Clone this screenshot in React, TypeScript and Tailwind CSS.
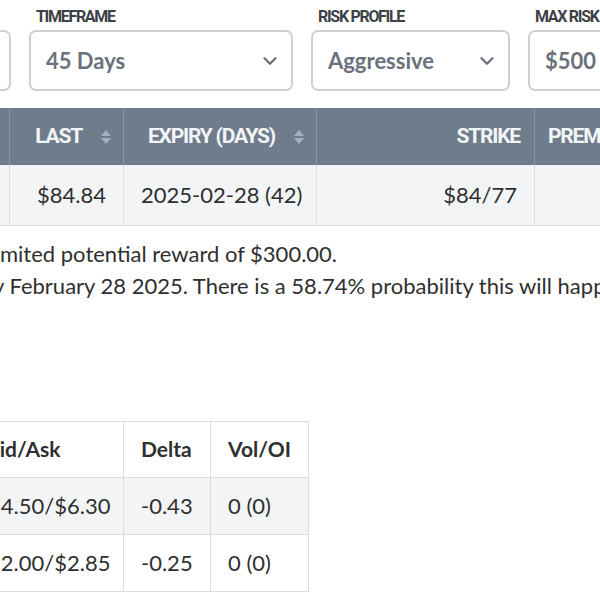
import { ChevronDown } from "lucide-react";

function SortIcon() {
  return (
    <svg width="12" height="16" viewBox="0 0 12 16" className="shrink-0">
      <path d="M6 1 L11 7 H1 Z" fill="#a7b0ba" />
      <path d="M6 15 L11 9 H1 Z" fill="#a7b0ba" />
    </svg>
  );
}

function Field({
  label,
  value,
  width,
  chevron = true,
}: {
  label: string;
  value: string;
  width: string;
  chevron?: boolean;
}) {
  return (
    <div className={`flex flex-col shrink-0 ${width}`}>
      <div className="h-[16px] mb-[5px] pl-[7px] text-[16px] leading-[16px] font-bold uppercase text-[#3d4046] tracking-[-1.3px] font-['Roboto',sans-serif] whitespace-nowrap">
        {label}
      </div>
      <div className="h-[61px] flex items-center justify-between border-2 border-[#cdd1d6] rounded-[7px] pl-[15px] pr-[10px] bg-white">
        <span className="text-[22px] font-bold text-[#6a717c] whitespace-nowrap">{value}</span>
        {chevron && <ChevronDown size={22} strokeWidth={2.5} color="#6a717c" />}
      </div>
    </div>
  );
}

function Cut({ text }: { text: string }) {
  // leading part of the line, hanging off the left edge
  return (
    <span className="inline-flex justify-end w-0 whitespace-nowrap">
      <span>{text}</span>
    </span>
  );
}

export default function App() {
  const head = "h-[57px] bg-[#6f7c8b] border-x border-[#8896a4] text-[#f2f4f6] text-[21px] font-bold uppercase tracking-[-1.2px] font-['Roboto',sans-serif]";
  const cell = "h-[60px] border-x border-[#d9dde2] text-[22px] text-[#2f2f2f]";
  const lowTh = "h-[56px] border border-[#d9dde2] text-[21px] font-bold text-[#2f2f2f] text-left pl-[17px]";
  const lowTd = "h-[57px] border border-[#d9dde2] text-[22px] text-[#2f2f2f] text-left pl-[17px]";

  return (
    <div className="w-[600px] h-[600px] overflow-hidden bg-white font-['Lato',sans-serif]">
      {/* Filters */}
      <div className="flex gap-[18px] pt-[9px] ml-[-139px]">
        <Field label="Ticker" value="XOM" width="w-[150px]" chevron={false} />
        <Field label="Timeframe" value="45 Days" width="w-[264px]" />
        <Field label="Risk Profile" value="Aggressive" width="w-[199px]" />
        <Field label="Max Risk" value="$500" width="w-[200px]" chevron={false} />
      </div>

      {/* Trade table */}
      <table className="mt-[17px] ml-[-111px] w-[845px] table-fixed border-collapse">
        <colgroup>
          <col className="w-[120px]" />
          <col className="w-[114px]" />
          <col className="w-[193px]" />
          <col className="w-[218px]" />
          <col className="w-[200px]" />
        </colgroup>
        <thead>
          <tr>
            <th className={head}>
              <div className="flex items-center justify-end gap-[18px] pr-[11px]">
                <span>Symbol</span>
                <SortIcon />
              </div>
            </th>
            <th className={head}>
              <div className="flex items-center justify-end gap-[18px] pr-[11px]">
                <span>Last</span>
                <SortIcon />
              </div>
            </th>
            <th className={head}>
              <div className="flex items-center justify-end gap-[18px] pr-[11px]">
                <span>Expiry (Days)</span>
                <SortIcon />
              </div>
            </th>
            <th className={`${head} text-right pr-[14px]`}>Strike</th>
            <th className={`${head} text-left pl-[13px]`}>Premium</th>
          </tr>
        </thead>
        <tbody>
          <tr className="bg-[#f3f4f6] border-b border-[#d9dde2]">
            <td className={`${cell} text-left pl-[17px]`}>XOM</td>
            <td className={`${cell} text-right pr-[17px]`}>$84.84</td>
            <td className={`${cell} text-left pl-[17px] whitespace-nowrap`}>2025-02-28 (42)</td>
            <td className={`${cell} text-right pr-[17px]`}>$84/77</td>
            <td className={cell}></td>
          </tr>
        </tbody>
      </table>

      {/* Summary */}
      <div className="mt-[12px] text-[22px] leading-[32px] text-[#2f2f2f] whitespace-nowrap">
        <p>
          <Cut text="This trade has a li" />
          mited potential reward of $300.00.
        </p>
        <p className="ml-[-7px]">
          <Cut text="The maximum reward is realized if XOM stays above $84.00 b" />
          y February 28 2025. There is a 58.74% probability this will happen.
        </p>
      </div>

      {/* Legs */}
      <table className="mt-[119px] ml-[-30px] w-[338px] table-fixed border-collapse">
        <colgroup>
          <col className="w-[153px]" />
          <col className="w-[87px]" />
          <col className="w-[98px]" />
        </colgroup>
        <thead>
          <tr className="bg-white">
            <th className={`${lowTh} !pl-[15px]`}>Bid/Ask</th>
            <th className={lowTh}>Delta</th>
            <th className={lowTh}>Vol/OI</th>
          </tr>
        </thead>
        <tbody>
          <tr className="bg-[#f3f4f6]">
            <td className={lowTd}>$4.50/$6.30</td>
            <td className={lowTd}>-0.43</td>
            <td className={lowTd}>0 (0)</td>
          </tr>
          <tr className="bg-white">
            <td className={lowTd}>$2.00/$2.85</td>
            <td className={lowTd}>-0.25</td>
            <td className={lowTd}>0 (0)</td>
          </tr>
        </tbody>
      </table>
    </div>
  );
}
